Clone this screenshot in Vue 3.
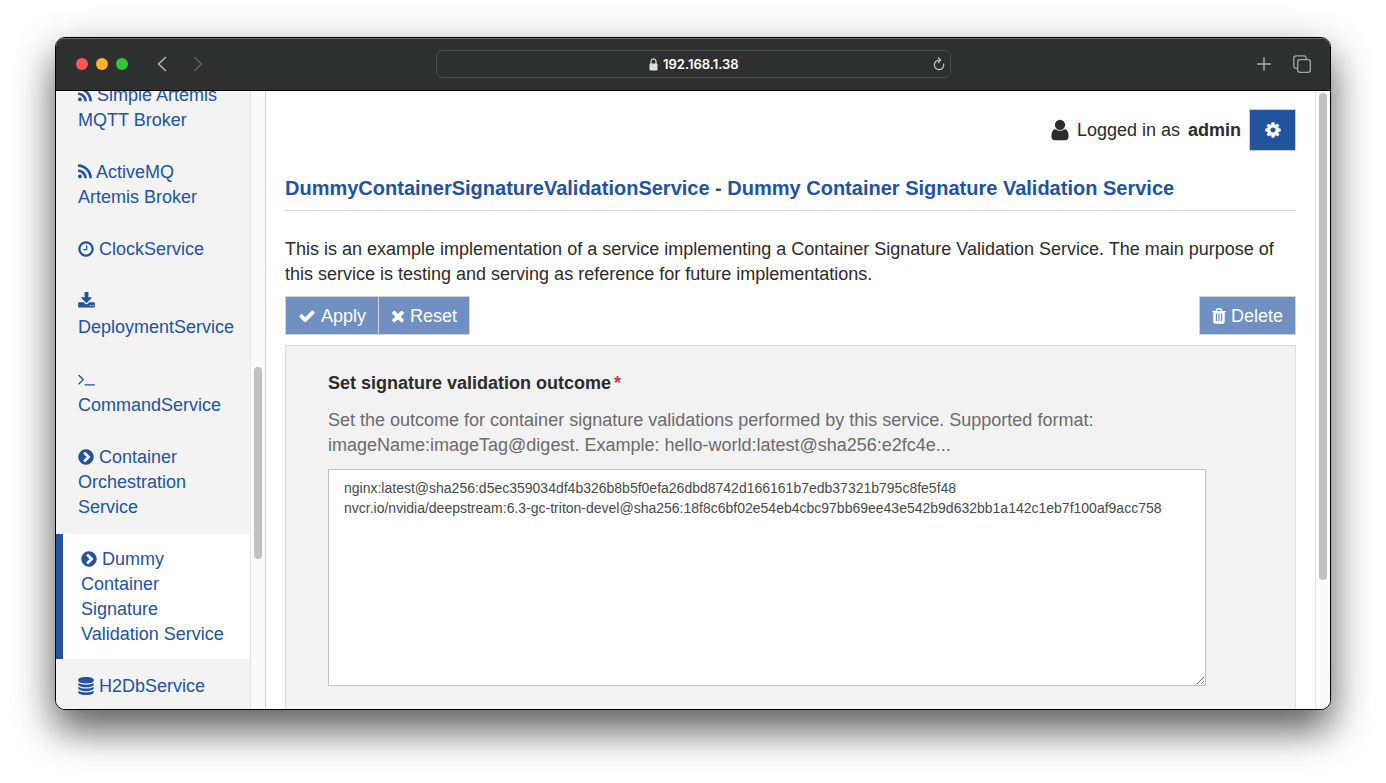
<script setup>
import { ref } from 'vue'

const icons = {
  rss: {
    box: '192 0 1408 1792',
    width: 14,
    d: 'M576 1344q0 80-56 136t-136 56-136-56-56-136 56-136 136-56 136 56 56 136zm512 123q2 28-17 48-18 21-47 21h-135q-25 0-43-16.5t-20-41.5q-22-229-184.5-391.5t-391.5-184.5q-25-2-41.5-20t-16.5-43v-135q0-29 21-47 17-17 43-17h5q160 13 306 80.5t259 181.5q114 113 181.5 259t80.5 306zm512 2q2 27-18 47-18 20-46 20h-143q-26 0-44.5-17.5t-19.5-42.5q-12-215-101-408.5t-231.5-336-336-231.5-408.5-102q-25-1-42.5-19.5t-17.5-43.5v-143q0-28 20-46 18-18 44-18h3q262 13 501.5 120t425.5 294q187 186 294 425.5t120 501.5z'
  },
  clock: {
    box: '128 0 1536 1792',
    width: 16,
    d: 'M1024 544v448q0 14-9 23t-23 9h-320q-14 0-23-9t-9-23v-64q0-14 9-23t23-9h224v-352q0-14 9-23t23-9h64q14 0 23 9t9 23zm416 352q0-148-73-273t-198-198-273-73-273 73-198 198-73 273 73 273 198 198 273 73 273-73 198-198 73-273zm224 0q0 209-103 385.5t-279.5 279.5-385.5 103-385.5-103-279.5-279.5-103-385.5 103-385.5 279.5-279.5 385.5-103 385.5 103 279.5 279.5 103 385.5z'
  },
  download: {
    box: '64 0 1664 1792',
    width: 17,
    d: 'M1344 1344q0-26-19-45t-45-19-45 19-19 45 19 45 45 19 45-19 19-45zm256 0q0-26-19-45t-45-19-45 19-19 45 19 45 45 19 45-19 19-45zm128-224v320q0 40-28 68t-68 28h-1472q-40 0-68-28t-28-68v-320q0-40 28-68t68-28h465l135 136q58 56 136 56t136-56l136-136h464q40 0 68 28t28 68zm-325-569q17 41-14 70l-448 448q-18 19-45 19t-45-19l-448-448q-31-29-14-70 17-39 59-39h256v-448q0-26 19-45t45-19h256q26 0 45 19t19 45v448h256q42 0 59 39z'
  },
  terminal: {
    box: '64 0 1664 1792',
    width: 17,
    d: 'M649 983l-466 466q-10 10-23 10t-23-10l-50-50q-10-10-10-23t10-23l393-393-393-393q-10-10-10-23t10-23l50-50q10-10 23-10t23 10l466 466q10 10 10 23t-10 23zm1079 457v64q0 14-9 23t-23 9h-960q-14 0-23-9t-9-23v-64q0-14 9-23t23-9h960q14 0 23 9t9 23z'
  },
  chevron: {
    box: '128 0 1536 1792',
    width: 16,
    d: 'M845 1395l454-454q19-19 19-45t-19-45l-454-454q-19-19-45-19t-45 19l-102 102q-19 19-19 45t19 45l307 307-307 307q-19 19-19 45t19 45l102 102q19 19 45 19t45-19zm819-499q0 209-103 385.5t-279.5 279.5-385.5 103-385.5-103-279.5-279.5-103-385.5 103-385.5 279.5-279.5 385.5-103 385.5 103 279.5 279.5 103 385.5z'
  },
  database: {
    box: '128 0 1536 1792',
    width: 16,
    d: 'M896 768q237 0 443-43t325-127v170q0 69-103 128t-280 93.5-385 34.5-385-34.5-280-93.5-103-128v-170q119 84 325 127t443 43zm0 768q237 0 443-43t325-127v170q0 69-103 128t-280 93.5-385 34.5-385-34.5-280-93.5-103-128v-170q119 84 325 127t443 43zm0-384q237 0 443-43t325-127v170q0 69-103 128t-280 93.5-385 34.5-385-34.5-280-93.5-103-128v-170q119 84 325 127t443 43zm0-1152q208 0 385 34.5t280 93.5 103 128v128q0 69-103 128t-280 93.5-385 34.5-385-34.5-280-93.5-103-128v-128q0-69 103-128t280-93.5 385-34.5z'
  }
}

const services = [
  { icon: 'rss', name: 'Simple Artemis MQTT Broker' },
  { icon: 'rss', name: 'ActiveMQ Artemis Broker' },
  { icon: 'clock', name: 'ClockService' },
  { icon: 'download', name: 'DeploymentService', stacked: true },
  { icon: 'terminal', name: 'CommandService', stacked: true },
  { icon: 'chevron', name: 'Container Orchestration Service' },
  { icon: 'chevron', name: 'Dummy Container Signature Validation Service', active: true },
  { icon: 'database', name: 'H2DbService' }
]

const address = ref('192.168.1.38')
const outcome = ref(
  'nginx:latest@sha256:d5ec359034df4b326b8b5f0efa26dbd8742d166161b7edb37321b795c8fe5f48\n' +
  'nvcr.io/nvidia/deepstream:6.3-gc-triton-devel@sha256:18f8c6bf02e54eb4cbc97bb69ee43e542b9d632bb1a142c1eb7f100af9acc758'
)
</script>

<template>
  <div class="desktop">
    <div class="window">
      <header class="toolbar">
        <div class="toolbar-side">
          <div class="lights">
            <button class="light red" aria-label="Close"></button>
            <button class="light amber" aria-label="Minimise"></button>
            <button class="light green" aria-label="Zoom"></button>
          </div>
          <div class="history">
            <button class="tool" aria-label="Back">
              <svg width="12" height="18" viewBox="0 0 12 18"><path d="M9.500 2.500 2.500 9 9.500 15.500" fill="none" stroke="#b4b5b4" stroke-width="1.600" stroke-linecap="round" stroke-linejoin="round" /></svg>
            </button>
            <button class="tool" aria-label="Forward" disabled>
              <svg width="12" height="18" viewBox="0 0 12 18"><path d="M2.500 2.500 9.500 9 2.500 15.500" fill="none" stroke="#595b5a" stroke-width="1.600" stroke-linecap="round" stroke-linejoin="round" /></svg>
            </button>
          </div>
        </div>
        <div class="address">
          <label class="address-text">
            <svg width="9" height="13" viewBox="0 0 9 13"><path d="M2 6V3.600a2.500 2.700 0 0 1 5 0V6" fill="none" stroke="#dededf" stroke-width="1.200" /><rect x="0.500" y="5.500" width="8" height="7" rx="1" fill="#dededf" /></svg>
            <input v-model="address" type="text" aria-label="Address" />
          </label>
          <button class="tool" aria-label="Reload">
            <svg width="12" height="14" viewBox="0 0 12 14"><path d="M10.700 7.200A4.700 4.700 0 1 1 6 3.200h1" fill="none" stroke="#c8c9c8" stroke-width="1.200" stroke-linecap="round" /><path d="M5.300 0.800 7.600 3.200 5.300 5.500" fill="none" stroke="#c8c9c8" stroke-width="1.200" stroke-linecap="round" stroke-linejoin="round" /></svg>
          </button>
        </div>
        <div class="toolbar-side end">
          <button class="tool" aria-label="New tab">
            <svg width="14" height="14" viewBox="0 0 14 14"><path d="M7 0.500V13.500M0.500 7H13.500" stroke="#b0b1b0" stroke-width="1.300" stroke-linecap="round" /></svg>
          </button>
          <button class="tool" aria-label="Show tabs">
            <svg width="18" height="18" viewBox="0 0 18 18" fill="none" stroke="#a6a7a6" stroke-width="1.300"><rect x="4.700" y="4.700" width="12.600" height="12.600" rx="2.200" /><path d="M4.500 13.300H3a2.200 2.200 0 0 1-2.200-2.200V3A2.200 2.200 0 0 1 3 0.800H11A2.200 2.200 0 0 1 13.200 3V4.500" /></svg>
          </button>
        </div>
      </header>

      <div class="content">
        <nav class="sidebar" aria-label="Services">
          <ul class="services">
            <li v-for="s in services" :key="s.name">
              <a href="#" :class="['service', { active: s.active, stacked: s.stacked }]">
                <svg class="service-icon" :width="icons[s.icon].width" height="18" :viewBox="icons[s.icon].box" aria-hidden="true"><path :d="icons[s.icon].d" /></svg>
                {{ s.name }}
              </a>
            </li>
          </ul>
        </nav>
        <div class="track track-side"><div class="thumb"></div></div>

        <main class="main">
          <div class="session">
            <svg class="user-icon" width="18" height="24" viewBox="224 0 1344 1792" aria-hidden="true"><path d="M1536 1399q0 109-62.500 187t-150.500 78h-854q-88 0-150.500-78t-62.500-187q0-85 8.500-160.500t31.500-152 58.500-131 94-89 134.500-34.500q131 128 313 128t313-128q76 0 134.500 34.500t94 89 58.500 131 31.500 152 8.500 160.500zm-256-887q0 159-112.500 271.500t-271.500 112.500-271.500-112.500-112.500-271.500 112.500-271.500 271.500-112.500 271.500 112.500 112.500 271.500z" /></svg>
            <span>Logged in as</span>
            <strong>admin</strong>
            <button class="settings" aria-label="Settings">
              <svg width="16" height="18" viewBox="128 0 1536 1792"><path d="M1152 896q0-106-75-181t-181-75-181 75-75 181 75 181 181 75 181-75 75-181zm512-109v222q0 12-8 23t-20 13l-185 28q-19 54-39 91 35 50 107 138 10 12 10 25t-9 23q-27 37-99 108t-94 71q-12 0-26-9l-138-108q-44 23-91 38-16 136-29 186-7 28-36 28h-222q-14 0-24.500-8.500t-11.500-21.500l-28-184q-49-16-90-37l-141 107q-10 9-25 9-14 0-25-11-126-114-165-168-7-10-7-23 0-12 8-23 15-21 51-66.500t54-70.500q-27-50-41-99l-183-27q-13-2-21-12.500t-8-23.500v-222q0-12 8-23t19-13l186-28q14-46 39-92-40-57-107-138-10-12-10-24 0-10 9-23 26-36 98.500-107.500t94.500-71.500q13 0 26 10l138 107q44-23 91-38 16-136 29-186 7-28 36-28h222q14 0 24.500 8.500t11.500 21.500l28 184q49 16 90 37l142-107q9-9 24-9 13 0 25 10 129 119 165 170 7 8 7 22 0 12-8 23-15 21-51 66.500t-54 70.500q26 50 41 98l183 28q13 2 21 12.500t8 23.500z" /></svg>
            </button>
          </div>

          <h1>DummyContainerSignatureValidationService - Dummy Container Signature Validation Service</h1>
          <p class="summary">This is an example implementation of a service implementing a Container Signature Validation Service. The main purpose of this service is testing and serving as reference for future implementations.</p>

          <div class="actions">
            <div class="group">
              <button class="action" disabled>
                <svg width="18" height="18" viewBox="0 0 1792 1792" aria-hidden="true"><path d="M1671 566q0 40-28 68l-724 724-136 136q-28 28-68 28t-68-28l-136-136-362-362q-28-28-28-68t28-68l136-136q28-28 68-28t68 28l294 295 656-657q28-28 68-28t68 28l136 136q28 28 28 68z" /></svg>
                Apply
              </button>
              <button class="action" disabled>
                <svg width="14" height="18" viewBox="192 0 1408 1792" aria-hidden="true"><path d="M1490 1322q0 40-28 68l-136 136q-28 28-68 28t-68-28l-294-294-294 294q-28 28-68 28t-68-28l-136-136q-28-28-28-68t28-68l294-294-294-294q-28-28-28-68t28-68l136-136q28-28 68-28t68 28l294 294 294-294q28-28 68-28t68 28l136 136q28 28 28 68t-28 68l-294 294 294 294q28 28 28 68z" /></svg>
                Reset
              </button>
            </div>
            <button class="action" disabled>
              <svg width="14" height="18" viewBox="192 0 1408 1792" aria-hidden="true"><path d="M704 1376v-704q0-14-9-23t-23-9h-64q-14 0-23 9t-9 23v704q0 14 9 23t23 9h64q14 0 23-9t9-23zm256 0v-704q0-14-9-23t-23-9h-64q-14 0-23 9t-9 23v704q0 14 9 23t23 9h64q14 0 23-9t9-23zm256 0v-704q0-14-9-23t-23-9h-64q-14 0-23 9t-9 23v704q0 14 9 23t23 9h64q14 0 23-9t9-23zm-544-992h448l-48-117q-7-9-17-11h-317q-10 2-17 11zm928 32v64q0 14-9 23t-23 9h-96v948q0 83-47 143.500t-113 60.500h-832q-66 0-113-58.500t-47-141.500v-952h-96q-14 0-23-9t-9-23v-64q0-14 9-23t23-9h309l70-167q15-37 54-63t79-26h320q40 0 79 26t54 63l70 167h309q14 0 23 9t9 23z" /></svg>
              Delete
            </button>
          </div>

          <section class="panel">
            <label class="field-label" for="outcome">Set signature validation outcome<span class="required">*</span></label>
            <p id="outcome-help" class="help">Set the outcome for container signature validations performed by this service. Supported format: imageName:imageTag@digest. Example: hello-world:latest@sha256:e2fc4e...</p>
            <textarea id="outcome" v-model="outcome" rows="10" spellcheck="false" aria-describedby="outcome-help"></textarea>
          </section>
        </main>
        <div class="track track-main"><div class="thumb"></div></div>
      </div>
    </div>
  </div>
</template>

<style>
body {
  margin: 0;
  background: #fff;
}
</style>

<style scoped>
.desktop,
.desktop * {
  box-sizing: border-box;
}
.desktop {
  display: flex;
  height: 100vh;
  padding: 37px 55px 73px;
  font-family: "Liberation Sans", Arial, sans-serif;
  font-size: 18px;
  line-height: 25px;
  color: #2b2b2b;
}
.window {
  flex: 1;
  min-width: 0;
  display: flex;
  flex-direction: column;
  overflow: hidden;
  border: 1px solid #000;
  border-radius: 10px;
  background: #fff;
  box-shadow: 0 20px 38px rgba(0, 0, 0, 0.6), 0 8px 50px rgba(0, 0, 0, 0.1);
}
button {
  font: inherit;
  color: inherit;
  margin: 0;
}

.toolbar {
  flex: none;
  display: flex;
  align-items: center;
  height: 53px;
  padding: 0 19px 1px 20px;
  background: #2e302f;
  border-top: 1px solid #6a6c6b;
  border-bottom: 1px solid #000;
}
.toolbar-side {
  flex: 1;
  display: flex;
  align-items: center;
  gap: 28px;
}
.toolbar-side.end {
  justify-content: flex-end;
  gap: 22px;
}
.lights {
  display: flex;
  gap: 8px;
}
.light {
  width: 12px;
  height: 12px;
  padding: 0;
  border: 0;
  border-radius: 50%;
}
.red {
  background: #fc5753;
}
.amber {
  background: #fdb32a;
}
.green {
  background: #2fc43a;
}
.history {
  display: flex;
  gap: 24px;
}
.tool {
  display: flex;
  padding: 0;
  border: 0;
  background: none;
}
.address {
  flex: 0 1 515px;
  display: flex;
  align-items: center;
  height: 28px;
  padding: 0 5px 0 20px;
  border: 1px solid #4b4d4c;
  border-radius: 7px;
}
.address-text {
  flex: 1;
  display: flex;
  align-items: center;
  justify-content: center;
  gap: 5px;
}
.address input {
  width: 78px;
  padding: 0;
  border: 0;
  outline: 0;
  background: none;
  color: #fff;
  font: 600 13px/18px Inter, sans-serif;
}

.content {
  flex: 1;
  min-height: 0;
  display: flex;
}
.sidebar {
  flex: none;
  width: 194px;
  overflow: hidden;
  background: #f3f3f3;
}
.services {
  display: flex;
  flex-direction: column;
  gap: 2px;
  margin: -21px 0 0;
  padding: 0;
  list-style: none;
}
.service {
  display: block;
  padding: 13px 15px 12px 22px;
  color: #22539c;
  text-decoration: none;
}
.service.active {
  padding-left: 18px;
  border-left: 7px solid #22539c;
  background: #fff;
}
.service-icon {
  vertical-align: -3px;
  fill: currentColor;
}
.stacked {
  padding-right: 10px;
}
.stacked .service-icon {
  display: block;
  margin: 3px 0 5px;
}

.track {
  flex: none;
  display: grid;
  width: 15px;
  padding: 0 3px;
  background: #fafafa;
  border-left: 1px solid #e4e4e4;
}
.track-side {
  width: 16px;
  border-right: 1px solid #d2d2d2;
  grid-template-rows: 276fr 192fr 150fr;
}
.track-main {
  grid-template-rows: 2fr 487fr 129fr;
}
.thumb {
  grid-row: 2;
  border-radius: 4px;
  background: #c1c1c1;
}

.main {
  flex: 1;
  min-width: 0;
  display: flex;
  flex-direction: column;
  overflow: hidden;
  padding: 18px 19px 0;
}
.session {
  display: flex;
  align-items: center;
  justify-content: flex-end;
  gap: 8px;
}
.user-icon {
  fill: #2b2b2b;
}
.settings {
  display: flex;
  align-items: center;
  justify-content: center;
  width: 47px;
  height: 42px;
  padding: 0;
  border: 1px solid #ccc;
  background: #22539c;
}
.settings svg,
.action svg {
  fill: #fff;
}
h1 {
  margin: 25px 0 0;
  padding-bottom: 9px;
  border-bottom: 1px solid #d8d8d8;
  font-size: 20px;
  line-height: 25px;
  font-weight: 700;
  color: #22539c;
}
.summary {
  margin: 26px 0 9px;
}
.actions {
  display: flex;
  justify-content: space-between;
}
.group {
  display: flex;
}
.action {
  display: flex;
  align-items: center;
  gap: 5px;
  height: 39px;
  padding: 1px 12px 0;
  border: 1px solid #d3d3d3;
  background: #6f90c0;
  color: #fff;
}
.action + .action {
  margin-left: -1px;
}
.panel {
  flex: 1;
  margin-top: 10px;
  padding: 25px 89px 24px 42px;
  border: 1px solid #ddd;
  border-bottom: 0;
  background: #f2f2f2;
}
.field-label {
  display: block;
  font-weight: 700;
}
.required {
  margin-left: 3px;
  color: #b94038;
}
.help {
  margin: 12px 0 11px;
  color: #6b6b6b;
}
textarea {
  display: block;
  width: 100%;
  height: 217px;
  padding: 8px 15px;
  border: 1px solid #c2c2c2;
  border-radius: 0;
  outline: 0;
  resize: both;
  background: #fff;
  color: #484848;
  font: 14px/20px "Liberation Sans", Arial, sans-serif;
}
</style>
